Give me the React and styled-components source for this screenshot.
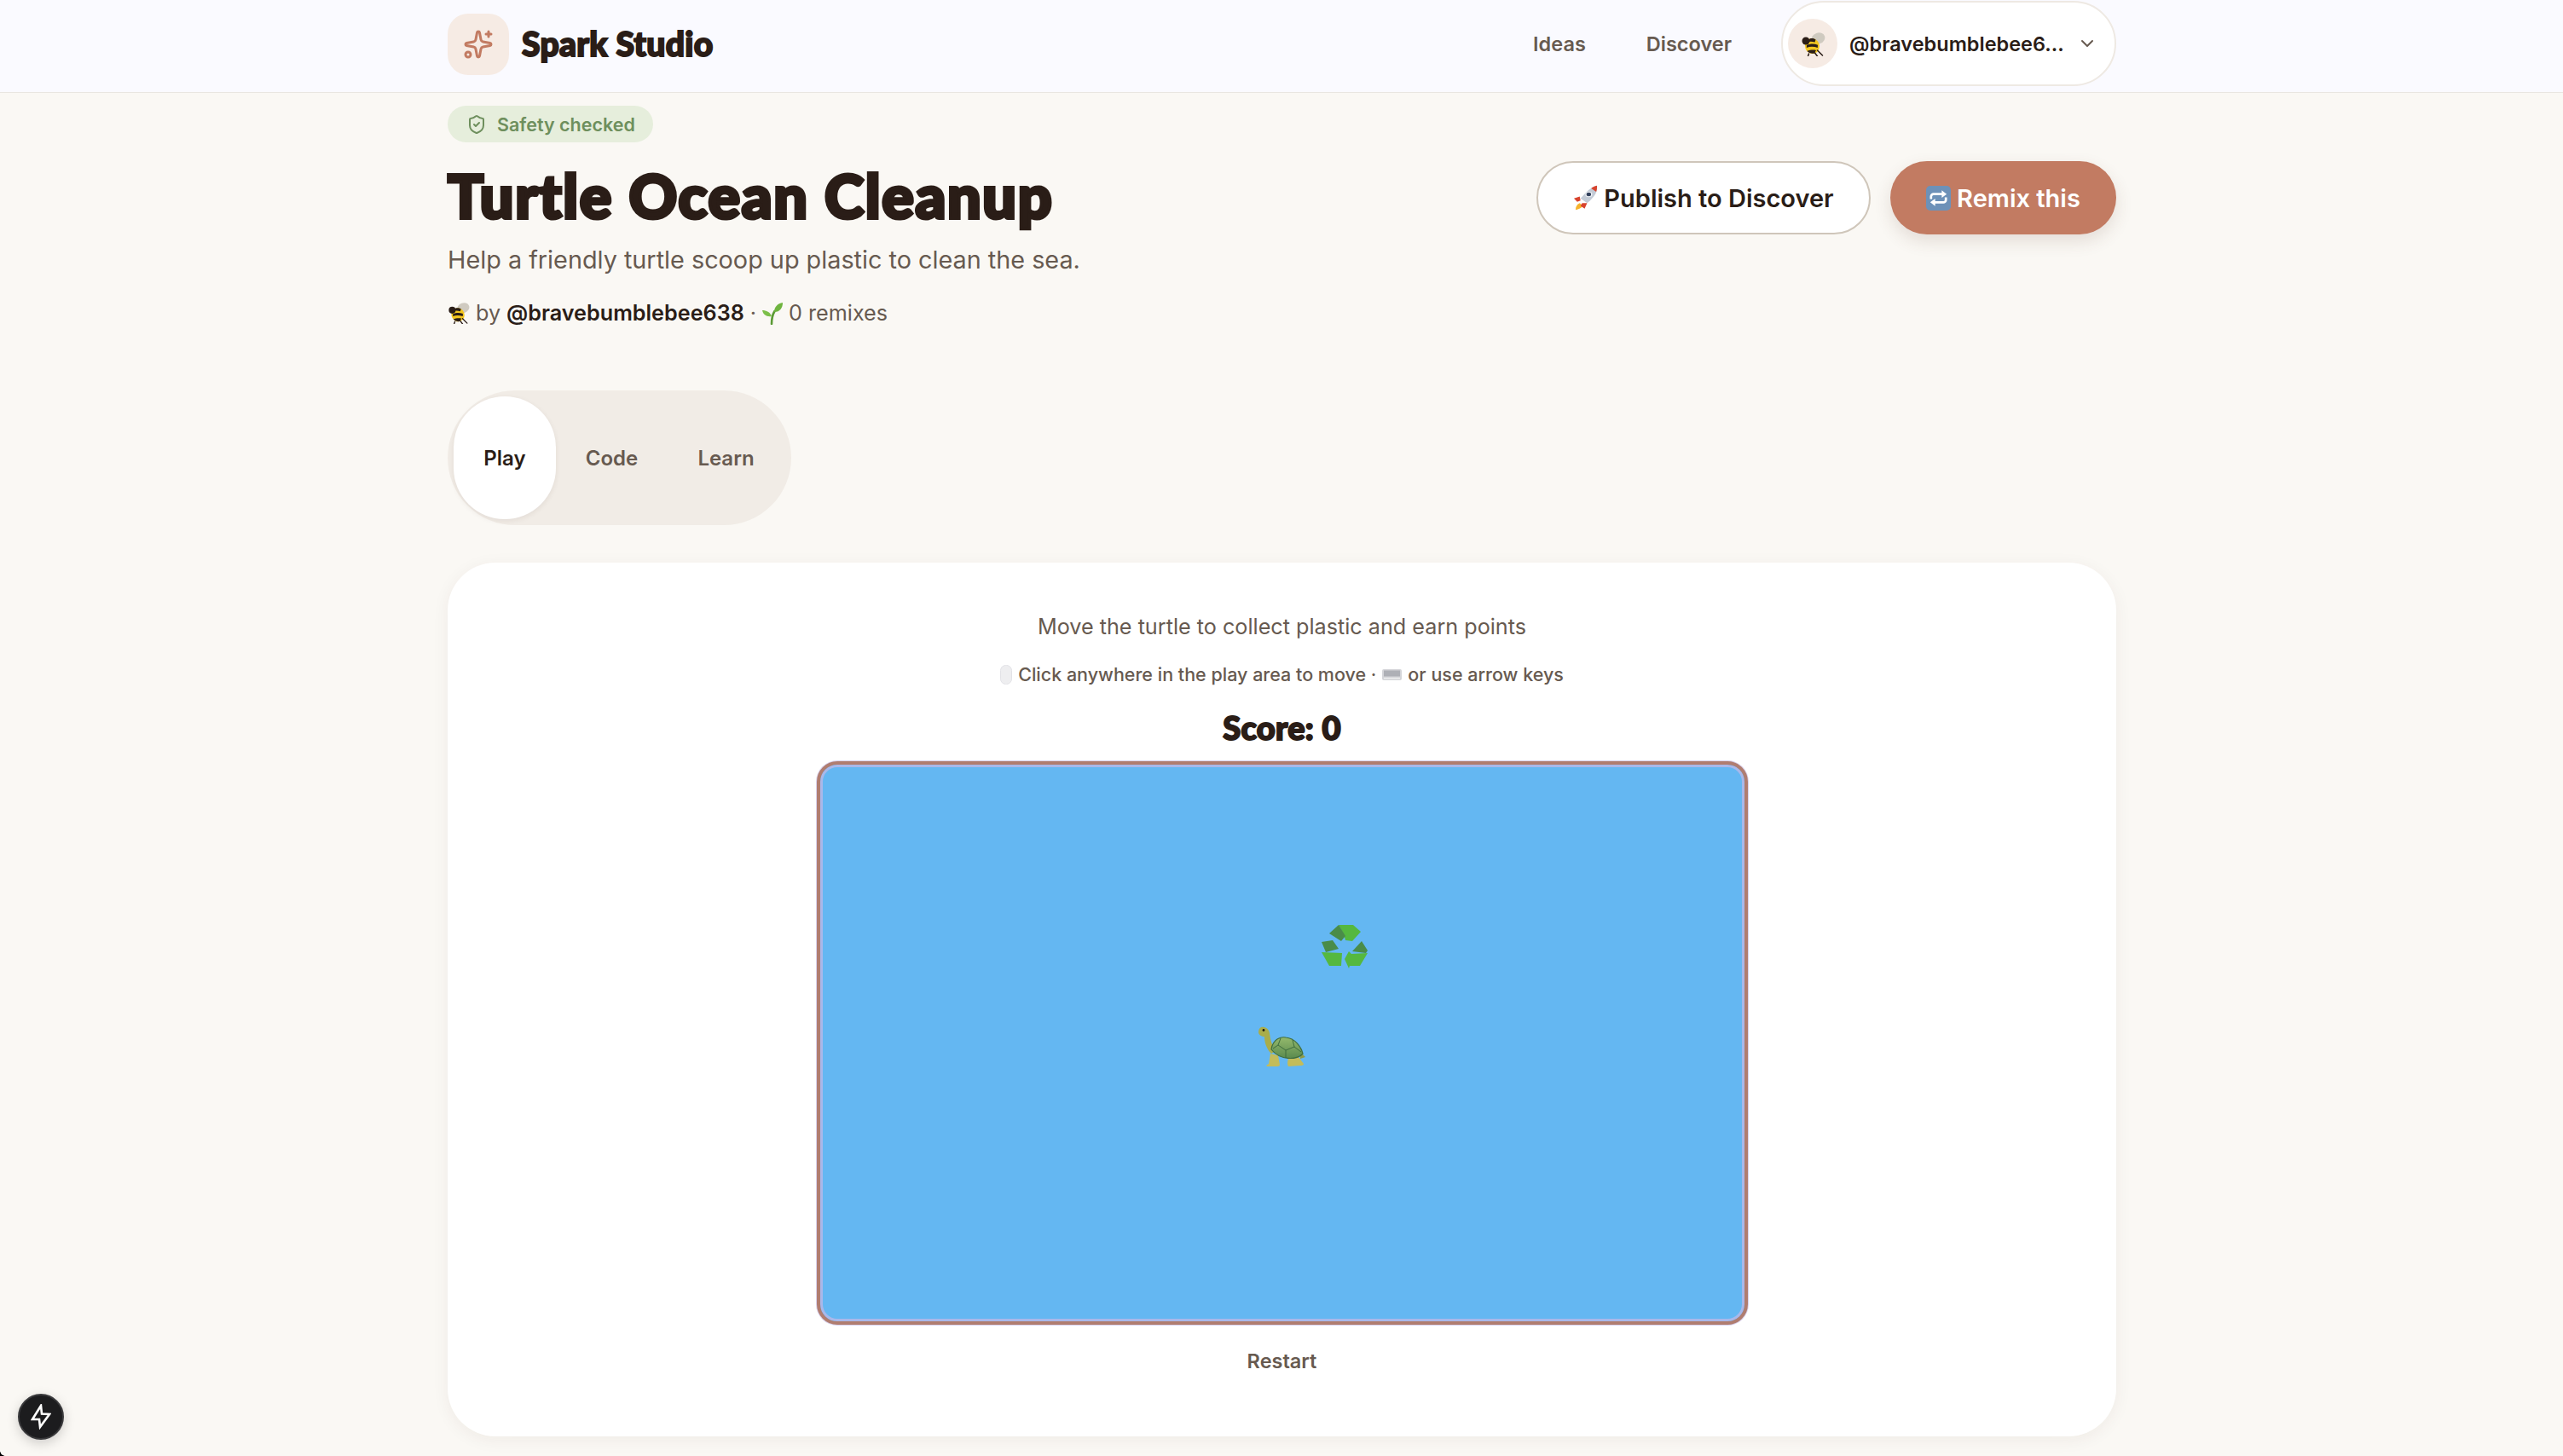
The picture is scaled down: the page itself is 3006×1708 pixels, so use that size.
import React from 'react';
import styled, { createGlobalStyle } from 'styled-components';
import { Sparkles, ShieldCheck, ChevronDown } from 'lucide-react';

const Global = createGlobalStyle`
  html, body { margin: 0; padding: 0; height: 1708px; overflow: hidden; background: #faf8f4; }
  body { font-family: Inter, "Liberation Sans", sans-serif; color: #2a1d17; }
  * { box-sizing: border-box; }
`;

const display = `
  font-family: Lato, "Liberation Sans", sans-serif;
  font-weight: 900;
  color: #2a1d17;
  -webkit-text-stroke-color: #2a1d17;
`;

const Header = styled.header`
  height: 109px;
  padding: 1px 0 7px;
  background: #fafaff;
  border-bottom: 1px solid #e9e6e1;
`;
const Inner = styled.div`
  width: 1957px;
  height: 100%;
  margin-left: 525px;
  display: flex;
  align-items: center;
`;
const LogoBox = styled.div`
  width: 72px;
  height: 72px;
  margin-top: 2px;
  border-radius: 24px;
  background: #f6ebe4;
  color: #c27b62;
  display: flex;
  align-items: center;
  justify-content: center;
`;
const Brand = styled.div`
  ${display}
  margin-left: 15px;
  font-size: 39px;
  line-height: 48px;
  letter-spacing: 0.300px;
  -webkit-text-stroke-width: 2px;
`;
const Nav = styled.nav`
  margin-left: auto;
  display: flex;
  align-items: center;
  gap: 71px;
  margin-right: 58px;
`;
const NavLink = styled.a`
  font-size: 23.500px;
  font-weight: 600;
  color: #675a50;
`;
const UserPill = styled.div`
  width: 393px;
  height: 100px;
  border-radius: 50px;
  border: 2px solid #eee9e3;
  background: #fff;
  padding-left: 6px;
  display: flex;
  align-items: center;
`;
const Avatar = styled.div`
  width: 58px;
  height: 58px;
  border-radius: 50%;
  background: #f6ebe4;
  display: flex;
  align-items: center;
  justify-content: center;
`;
const UserName = styled.span`
  margin-left: 14px;
  width: 251px;
  font-size: 23.500px;
  font-weight: 600;
  white-space: nowrap;
  color: #2a1d17;
`;
const Chev = styled(ChevronDown)`
  margin-left: 16px;
  color: #675a50;
`;

const Main = styled.main`
  width: 1957px;
  margin-left: 525px;
`;
const Badge = styled.div`
  display: inline-flex;
  align-items: center;
  gap: 12px;
  height: 43px;
  margin-top: 15px;
  padding: 0 21px 0 22px;
  border-radius: 22px;
  background: #e6eedc;
  color: #6e8f5d;
  font-size: 21.500px;
  font-weight: 600;
  vertical-align: top;
`;
const TitleRow = styled.div`
  display: flex;
  justify-content: space-between;
  align-items: flex-start;
  margin-top: 22px;
`;
const Title = styled.h1`
  ${display}
  margin: 0;
  font-size: 70px;
  line-height: 80px;
  letter-spacing: 1.700px;
  -webkit-text-stroke-width: 4px;
`;
const Subtitle = styled.p`
  margin: 14px 0 0;
  font-size: 28.800px;
  line-height: 44px;
  color: #675a50;
`;
const Byline = styled.div`
  margin-top: 20px;
  font-size: 25.200px;
  line-height: 40px;
  color: #675a50;
  display: flex;
  align-items: center;
  gap: 7px;
`;
const Author = styled.strong`
  font-weight: 600;
  color: #2a1d17;
`;
const Actions = styled.div`
  display: flex;
  gap: 23px;
`;
const ActionButton = styled.button`
  height: 86px;
  border-radius: 43px;
  font-family: inherit;
  font-size: 29px;
  font-weight: 600;
  display: inline-flex;
  align-items: center;
  justify-content: center;
  gap: 7px;
  padding: 0;
  width: ${p => p.$w}px;
  border: ${p => (p.$primary ? '0' : '2px solid #cfc6ba')};
  background: ${p => (p.$primary ? '#c27b62' : '#fff')};
  color: ${p => (p.$primary ? '#fff' : '#2a1d17')};
  box-shadow: ${p => (p.$primary ? '0 8px 20px rgba(90,60,40,.14)' : 'none')};
`;
const Tabs = styled.div`
  display: flex;
  width: 403px;
  height: 158px;
  margin-top: 71px;
  padding: 7px;
  border-radius: 79px;
  background: #f1ece6;
`;
const Tab = styled.div`
  display: flex;
  align-items: center;
  justify-content: center;
  width: ${p => p.$w}px;
  border-radius: 72px;
  font-size: 24px;
  font-weight: 600;
  color: ${p => (p.$active ? '#2a1d17' : '#675a50')};
  background: ${p => (p.$active ? '#fff' : 'transparent')};
  box-shadow: ${p => (p.$active ? '0 2px 6px rgba(60,40,20,.08)' : 'none')};
`;
const Card = styled.section`
  height: 1025px;
  margin-top: 44px;
  padding-top: 55px;
  border-radius: 56px;
  background: #fff;
  box-shadow: 0 4px 20px rgba(60,40,20,.06);
  display: flex;
  flex-direction: column;
  align-items: center;
`;
const Intro = styled.p`
  margin: 0;
  font-size: 25.200px;
  line-height: 40px;
  color: #675a50;
`;
const Hint = styled.div`
  margin-top: 18px;
  font-size: 21.500px;
  font-weight: 500;
  line-height: 36px;
  color: #675a50;
  display: flex;
  align-items: center;
  gap: 7px;
`;
const Score = styled.div`
  ${display}
  margin-top: 22px;
  font-size: 38px;
  line-height: 44px;
  letter-spacing: 0.300px;
  -webkit-text-stroke-width: 2px;
`;
const Game = styled.div`
  position: relative;
  width: 1092px;
  height: 661px;
  margin-top: 18px;
  border: 4px solid #b07d70;
  border-radius: 24px;
  background: #64b7f2;
  box-shadow: inset 0 0 0 3px #a9b8ea, 0 0 0 1px #d9d3ee;
`;
const Sprite = styled.div`
  position: absolute;
  left: ${p => p.$x}px;
  top: ${p => p.$y}px;
  display: flex;
`;
const Restart = styled.button`
  margin-top: 25px;
  border: 0;
  padding: 0;
  background: none;
  font-family: inherit;
  font-size: 23.500px;
  font-weight: 600;
  line-height: 36px;
  color: #675a50;
`;
const DevBadge = styled.div`
  position: fixed;
  left: 21px;
  top: 1635px;
  width: 54px;
  height: 54px;
  border-radius: 50%;
  background: #1c1c1e;
  border: 2px solid #3a3a3c;
  box-shadow: 0 4px 14px rgba(0,0,0,.18);
  display: flex;
  align-items: center;
  justify-content: center;
`;
const WindowCorner = styled.div`
  position: fixed;
  left: 0;
  bottom: 0;
  width: 6px;
  height: 6px;
  background: radial-gradient(circle at 100% 0, transparent 5.500px, #000 6px);
`;

const Bee = ({ w = 26, h = 26 }) => (
  <svg width={w} height={h} viewBox="1 1 28 29">
    <ellipse cx="21" cy="9" rx="8" ry="6.500" fill="#cfcac0" transform="rotate(-20 21 9)" />
    <ellipse cx="14" cy="18" rx="8.500" ry="9" fill="#f3c61e" transform="rotate(-20 14 18)" />
    <path d="M11 9.500c3-1 6 0 7 1l-1 3c-3-1-6-1-8-.3zM7.500 17c4-2 9-2 13-.3l-.2 3.400c-4-1.600-9-1.600-13-.2zM8 24c3-1.600 8-1.800 10.500-1l-2 3.500c-3 .8-6 0-8.500-2.500z" fill="#2a1d17" />
    <circle cx="6.500" cy="12" r="4.500" fill="#2a1d17" />
    <path d="M10 27l-1 3M17 26l3 4M20 23l6 6" stroke="#2a1d17" strokeWidth="1.500" strokeLinecap="round" />
  </svg>
);
const Seedling = () => (
  <svg width="24" height="27" viewBox="1 2 24 27">
    <path d="M12 28c0-6 .5-10 3.500-15" stroke="#5b9a35" strokeWidth="2.600" fill="none" strokeLinecap="round" />
    <path d="M15 14c0-6 4-10 10-11 0 6-3 11-10 11z" fill="#6fb43f" />
    <path d="M12 19C10 14 6 12 1 12c1 5 5 8 11 7z" fill="#7cbf49" />
  </svg>
);
const Rocket = () => (
  <svg width="29" height="30" viewBox="0 0 30 38" preserveAspectRatio="none">
    <path d="M3 37c0-5 2-8 5-10l4 4c-2 3-5 5-9 6z" fill="#f6b32c" />
    <path d="M8 17l-7 3 4 5 4-2zM17 27l-3 8-5-4 2-4z" fill="#d8432e" />
    <path d="M29 1c1 8-2 16-12 26l-8-7C17 9 22 3 29 1z" fill="#c3cbd6" />
    <path d="M29 1c-3 1-5 2-7 4l6 5c1-3 1-6 1-9z" fill="#d8432e" />
    <circle cx="19" cy="14" r="3.500" fill="#33415c" stroke="#eef1f5" strokeWidth="1.400" />
  </svg>
);
const RepeatEmoji = () => (
  <svg width="29" height="29" viewBox="0 0 30 30">
    <rect width="30" height="30" rx="5" fill="#6d91b8" />
    <path d="M6 16v-3a3 3 0 0 1 3-3h11M24 14v3a3 3 0 0 1-3 3H10" stroke="#fff" strokeWidth="2.800" fill="none" />
    <path d="M19 5.500l6 4.500-6 4.500zM11 15.500l-6 4.500 6 4.500z" fill="#fff" />
  </svg>
);
const MouseEmoji = () => (
  <svg width="14" height="23" viewBox="0 0 14 23">
    <rect x="0.500" y="0.500" width="13" height="22" rx="6" fill="#eeeef0" stroke="#e2e2e6" />
  </svg>
);
const KeyboardEmoji = () => (
  <svg width="23" height="13" viewBox="0 0 23 13">
    <rect width="23" height="13" rx="2" fill="#d4d5d9" />
    <rect x="2" y="1.500" width="19" height="7" fill="#aeb0b6" />
    <rect x="2" y="10" width="19" height="1.500" fill="#eceded" />
  </svg>
);
const Recycle = () => (
  <svg width="55" height="54" viewBox="0 0 55 54">
    <polygon points="20,1 37,1 46,9 36,20 28,19 26,12" fill="#55b83f" />
    <polygon points="9,11 20,1 28,14 23,20" fill="#4a8c49" />
    <polygon points="0,33 24,34 23,49 9,49" fill="#55b83f" />
    <polygon points="0,21 13,19 20,29 5,33" fill="#4a8c49" />
    <polygon points="27,41 32,32 35,35 54,34 45,49 33,49 32,52" fill="#55b83f" />
    <polygon points="36,32 47,20 54,31 52,34" fill="#4a8c49" />
  </svg>
);
const Turtle = () => (
  <svg width="57" height="48" viewBox="0 0 57 48">
    <defs>
      <linearGradient id="shell" x1="0" y1="0" x2="0" y2="1">
        <stop offset="0" stopColor="#94b96c" />
        <stop offset="1" stopColor="#5a8a4e" />
      </linearGradient>
    </defs>
    <path d="M4 1C8 0 13 2 14 8C15 15 16 22 22 28L16 32C10 26 8 18 8 12C5 12 1 10 1 7C1 4 2 2 4 1z" fill="#a9ad4a" />
    <circle cx="7" cy="4.500" r="1.400" fill="#1d1a12" />
    <path d="M50 30L56 36L50 38z" fill="#8d9a48" />
    <path d="M15 32L24 34L26 45Q26 47 22 47L11 47Q9 46 13 44z" fill="#c3bc5a" />
    <path d="M36 38L48 36L54 44Q54 46 50 46L36 47Q34 44 36 38z" fill="#c3bc5a" />
    <path d="M16 27C18 14 28 12 33 13C44 14 51 24 53 32C46 40 26 40 16 27z" fill="url(#shell)" stroke="#3f6d3e" strokeWidth="1.200" />
    <path d="M27 14L24 22L33 28L43 24L41 16M24 22L18 26M33 28L33 37M43 24L51 30" stroke="#3f6d3e" strokeWidth="1" fill="none" />
  </svg>
);
const Bolt = () => (
  <svg width="24" height="30" viewBox="0 0 24 30" fill="none">
    <path d="M12 2L2 18h8l1 9 11-15-9-.500z" stroke="#fff" strokeWidth="2.600" strokeLinejoin="miter" />
  </svg>
);

export default function App() {
  return (
    <>
      <Global />
      <Header>
        <Inner>
          <LogoBox><Sparkles size={36} strokeWidth={2} /></LogoBox>
          <Brand>Spark Studio</Brand>
          <Nav>
            <NavLink>Ideas</NavLink>
            <NavLink>Discover</NavLink>
          </Nav>
          <UserPill>
            <Avatar><Bee w={29} h={29} /></Avatar>
            <UserName>@bravebumblebee6...</UserName>
            <Chev size={24} strokeWidth={2} />
          </UserPill>
        </Inner>
      </Header>
      <Main>
        <Badge><ShieldCheck size={24} strokeWidth={2} />Safety checked</Badge>
        <TitleRow>
          <div>
            <Title>Turtle Ocean Cleanup</Title>
            <Subtitle>Help a friendly turtle scoop up plastic to clean the sea.</Subtitle>
            <Byline>
              <Bee />
              <span>by</span>
              <Author>@bravebumblebee638</Author>
              <span>·</span>
              <Seedling />
              <span>0 remixes</span>
            </Byline>
          </div>
          <Actions>
            <ActionButton $w={392}><Rocket />Publish to Discover</ActionButton>
            <ActionButton $primary $w={265}><RepeatEmoji />Remix this</ActionButton>
          </Actions>
        </TitleRow>
        <Tabs>
          <Tab $active $w={120}>Play</Tab>
          <Tab $w={131}>Code</Tab>
          <Tab $w={137}>Learn</Tab>
        </Tabs>
        <Card>
          <Intro>Move the turtle to collect plastic and earn points</Intro>
          <Hint>
            <MouseEmoji />
            <span>Click anywhere in the play area to move ·</span>
            <KeyboardEmoji />
            <span>or use arrow keys</span>
          </Hint>
          <Score>Score: 0</Score>
          <Game>
            <Sprite $x={588} $y={187}><Recycle /></Sprite>
            <Sprite $x={513} $y={307}><Turtle /></Sprite>
          </Game>
          <Restart>Restart</Restart>
        </Card>
      </Main>
      <DevBadge><Bolt /></DevBadge>
      <WindowCorner />
    </>
  );
}
